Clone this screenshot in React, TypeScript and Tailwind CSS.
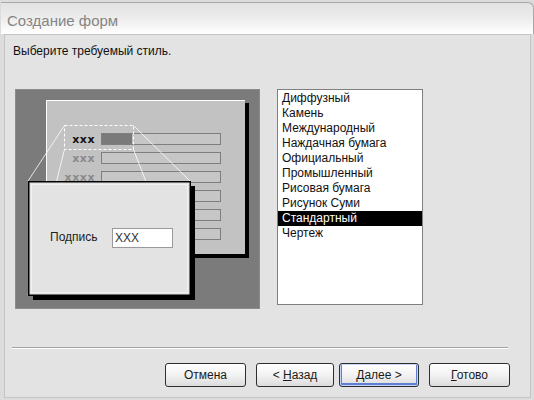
const styles = [
  'Диффузный',
  'Камень',
  'Международный',
  'Наждачная бумага',
  'Официальный',
  'Промышленный',
  'Рисовая бумага',
  'Рисунок Суми',
  'Стандартный',
  'Чертеж',
]

// only the first three labels are visible, the rest sit behind the card
const rows = [
  { y: 50, label: 'xxx', color: '#111' },
  { y: 69, label: 'xxx', color: '#8a8a8a' },
  { y: 88, label: 'xxxx', color: '#8a8a8a' },
  { y: 107, label: '', color: '' },
  { y: 126, label: '', color: '' },
  { y: 145, label: '', color: '' },
]

function Preview() {
  return (
    <svg width="245" height="220" viewBox="0 0 245 220" className="block shrink-0">
      <rect width="245" height="220" fill="#7b7b7b" />
      <rect x="0.5" y="0.5" width="244" height="219" fill="none" stroke="#8c8c8c" />
      {/* back form */}
      <rect x="34" y="14" width="200" height="155" fill="#000" />
      <rect x="31" y="11" width="199" height="154" fill="#c2c2c2" />
      <path d="M31.5 165 V11.5 H230" stroke="#fff" fill="none" />
      {rows.map((r, i) => (
        <g key={i}>
          <rect x="86.5" y={r.y - 5.5} width="119" height="11" fill="#c6c6c6" stroke="#7e7e7e" />
          {i === 0 && <rect x="87" y={r.y - 5} width="30" height="10" fill="#7a7a7a" />}
          {r.label && (
            <text
              x="80"
              y={r.y + 3.5}
              textAnchor="end"
              fontSize="11"
              fontWeight="bold"
              letterSpacing="0.5"
              fontFamily="'DejaVu Sans', sans-serif"
              fill={r.color}
            >
              {r.label}
            </text>
          )}
        </g>
      ))}
      {/* zoom outline */}
      <rect x="49.5" y="36.5" width="69" height="24" fill="none" stroke="#fff" strokeDasharray="3 2" />
      <g stroke="#fff" strokeWidth="0.8">
        <line x1="49.5" y1="36.5" x2="13" y2="92" />
        <line x1="49.5" y1="60.5" x2="13" y2="206" />
        <line x1="118.5" y1="36.5" x2="175" y2="92" />
        <line x1="118.5" y1="60.5" x2="175" y2="206" />
      </g>
      {/* front card */}
      <rect x="18" y="97" width="162" height="114" fill="#000" />
      <rect x="13.75" y="92.75" width="161.5" height="113.5" fill="#e3e3e3" stroke="#000" strokeWidth="1.5" />
      <rect x="16.5" y="95.5" width="156" height="108" fill="none" stroke="#f1f1f1" />
      <text x="35" y="152" fontSize="12" fontFamily="'Liberation Sans', Arial, sans-serif" fill="#222">
        Подпись
      </text>
      <rect x="97.5" y="139.5" width="60" height="19" fill="#fff" stroke="#9a9a9a" />
      <text x="100" y="153" fontSize="12" fontFamily="'Liberation Sans', Arial, sans-serif" fill="#333">
        XXX
      </text>
    </svg>
  )
}

function Btn({ children, width, primary }: { children: React.ReactNode; width: string; primary?: boolean }) {
  return (
    <button
      className={
        'h-[24px] rounded-[3px] border border-[#2e2e2e] bg-gradient-to-b from-white via-[#f2f2f2] to-[#dcdcdc] text-[12px] text-[#1a1a1a] leading-none ' +
        width +
        (primary ? ' shadow-[inset_0_0_0_1px_#c6d4f7,inset_0_-1px_0_2px_#5d7fd4]' : '')
      }
    >
      {children}
    </button>
  )
}

export default function App() {
  return (
    <div className="w-[534px] h-[400px] bg-[#dcdcdc] flex flex-col overflow-hidden font-['Liberation_Sans',Arial,sans-serif]">
      {/* Title bar */}
      <div className="h-[32px] mt-[2px] ml-[1px] shrink-0 rounded-tr-[6px] border-t border-r border-[#a8a8a8] bg-gradient-to-b from-[#e2e2e2] via-[#ededed] to-white flex items-end pl-[6px] pb-[6px]">
        <span className="text-[15px] text-[#858585] leading-none">Создание форм</span>
      </div>

      {/* Body */}
      <div className="flex-1 ml-[4px] mr-[3px] mb-[2px] border border-[#c4c4c4] bg-[#e3e3e3] flex flex-col">
        <div className="pl-[8px] pt-[9px] text-[12px] leading-[14px] text-[#111]">Выберите требуемый стиль.</div>

        <div className="flex mt-[31px] pl-[10px]">
          <Preview />
          <ul className="ml-[17px] w-[146px] h-[216px] bg-white border border-[#7f7f7f] pt-[1px] text-[12px] text-[#111]">
            {styles.map((s) => (
              <li
                key={s}
                className={
                  'h-[15px] leading-[15px] pl-[4px] ' + (s === 'Стандартный' ? 'bg-black text-white' : '')
                }
              >
                {s}
              </li>
            ))}
          </ul>
        </div>

        <div className="mt-[38px] ml-[7px] w-[496px] border-t border-[#a3a3a3] border-b border-b-white" />

        <div className="flex mt-[14px] pl-[160px]">
          <Btn width="w-[81px]">Отмена</Btn>
          <div className="w-[10px]" />
          <Btn width="w-[78px]">
            &lt; <span className="underline">Н</span>азад
          </Btn>
          <div className="w-[5px]" />
          <Btn width="w-[80px]" primary>
            <span className="underline">Д</span>алее &gt;
          </Btn>
          <div className="w-[10px]" />
          <Btn width="w-[81px]">
            <span className="underline">Г</span>отово
          </Btn>
        </div>
      </div>
    </div>
  )
}
